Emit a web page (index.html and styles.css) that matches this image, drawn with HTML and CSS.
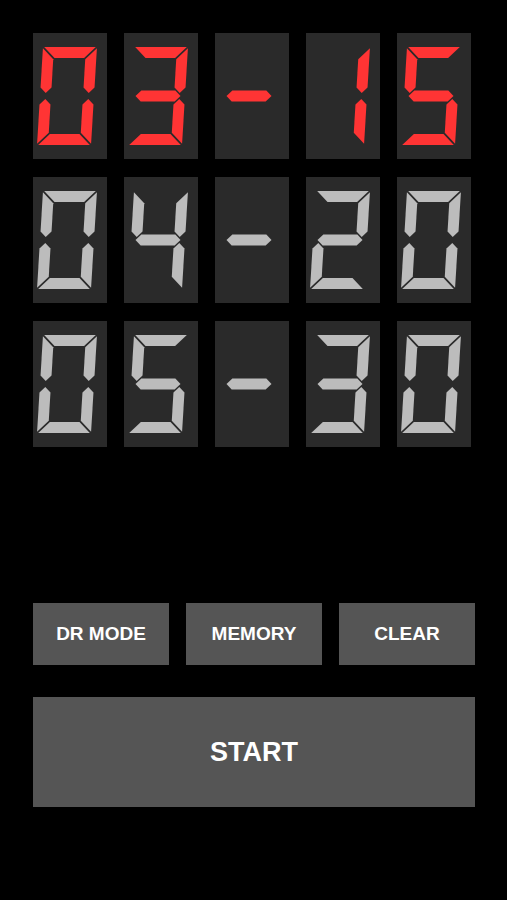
FILE: index.html
```html
<!DOCTYPE html>
<html lang="en">
<head>
    <meta charset="UTF-8">
    <title>Date Counter</title>
    <link rel="stylesheet" href="styles.css">
</head>
<body>
    <div class="app">
        <div class="display" id="display"></div>

        <div class="controls">
            <div class="button-row">
                <button class="btn">DR MODE</button>
                <button class="btn">MEMORY</button>
                <button class="btn">CLEAR</button>
            </div>
            <button class="btn btn-start">START</button>
        </div>
    </div>

    <script>
        // segment polygons, unskewed, in a 54x98 box
        const SEGMENTS = {
            a: '1.2,0 52.8,0 41.8,11 12.2,11',
            b: '54,1.2 54,40.5 48.5,46 43,40.5 43,12.2',
            c: '48.5,52 54,57.5 54,96.8 43,85.8 43,57.5',
            d: '1.2,98 52.8,98 41.8,87 12.2,87',
            e: '5.5,52 11,57.5 11,85.8 0,96.8 0,57.5',
            f: '0,1.2 11,12.2 11,40.5 5.5,46 0,40.5',
            g: '4.5,49 10,43.5 44,43.5 49.5,49 44,54.5 10,54.5'
        };

        const GLYPHS = {
            '0': 'abcdef', '1': 'bc', '2': 'abged', '3': 'abgcd', '4': 'fgbc',
            '5': 'afgcd', '6': 'afgedc', '7': 'abc', '8': 'abcdefg', '9': 'abcdfg',
            '-': 'g'
        };

        const rows = [
            { text: '03-15', lit: true },
            { text: '04-20', lit: false },
            { text: '05-30', lit: false }
        ];

        function digitSvg(ch) {
            const segs = GLYPHS[ch] || '';
            let polys = '';
            for (const s of segs) {
                polys += `<polygon points="${SEGMENTS[s]}"></polygon>`;
            }
            return `<svg class="digit" viewBox="-6 0 60 98" width="60" height="98">
                        <g transform="skewX(-3.5)">${polys}</g>
                    </svg>`;
        }

        const display = document.getElementById('display');
        rows.forEach(row => {
            for (const ch of row.text) {
                const cell = document.createElement('div');
                cell.className = 'cell' + (row.lit ? ' lit' : '');
                cell.innerHTML = digitSvg(ch);
                display.appendChild(cell);
            }
        });
    </script>
</body>
</html>
```

FILE: styles.css
```css
* {
    margin: 0;
    padding: 0;
    box-sizing: border-box;
}

html, body {
    height: 100%;
    background-color: #000;
}

body {
    font-family: "Liberation Sans", Arial, sans-serif;
    color: white;
}

.app {
    width: 442px;
    margin-left: 33px;
    padding-top: 33px;
}

.display {
    display: grid;
    grid-template-columns: repeat(5, 74px);
    grid-auto-rows: 126px;
    column-gap: 17px;
    row-gap: 18px;
}

.cell {
    background-color: #2a2a2a;
    display: flex;
    align-items: center;
    padding-left: 4px;
}

.digit {
    display: block;
    fill: #bcbcbc;
}

.cell.lit .digit {
    fill: #ff3434;
}

.controls {
    margin-top: 156px;
    display: flex;
    flex-direction: column;
    gap: 32px;
}

.button-row {
    display: grid;
    grid-template-columns: repeat(3, 1fr);
    column-gap: 17px;
}

.btn {
    background-color: #555555;
    border: none;
    color: white;
    font-family: inherit;
    font-weight: bold;
    font-size: 19px;
    height: 62px;
    cursor: pointer;
}

.btn-start {
    height: 110px;
    font-size: 27px;
}
```
